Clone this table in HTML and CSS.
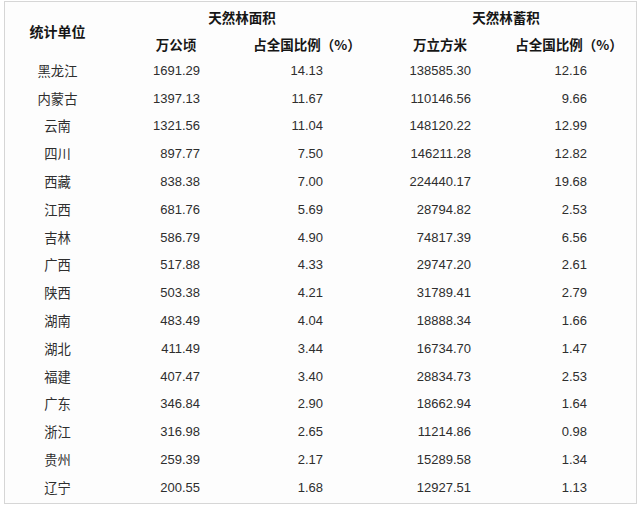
FILE: index.html
```html
<!DOCTYPE html>
<html lang="zh">
<head>
<meta charset="utf-8">
<title>天然林面积与蓄积</title>
<link rel="stylesheet" href="styles.css">
</head>
<body>
<div class="frame">
<table class="stats">
<colgroup>
<col class="c1"><col class="c2"><col class="c3"><col class="c4"><col class="c5">
</colgroup>
<thead>
<tr class="h1">
<th rowspan="2" class="unit">统计单位</th>
<th colspan="2" class="grp grp-a">天然林面积</th>
<th colspan="2" class="grp grp-b">天然林蓄积</th>
</tr>
<tr class="h2">
<th class="sub s2">万公顷</th>
<th class="sub s3">占全国比例（%）</th>
<th class="sub s4">万立方米</th>
<th class="sub s5">占全国比例（%）</th>
</tr>
</thead>
<tbody>
<tr><td class="name">黑龙江</td><td class="n n2">1691.29</td><td class="n n3">14.13</td><td class="n n4">138585.30</td><td class="n n5">12.16</td></tr>
<tr><td class="name">内蒙古</td><td class="n n2">1397.13</td><td class="n n3">11.67</td><td class="n n4">110146.56</td><td class="n n5">9.66</td></tr>
<tr><td class="name">云南</td><td class="n n2">1321.56</td><td class="n n3">11.04</td><td class="n n4">148120.22</td><td class="n n5">12.99</td></tr>
<tr><td class="name">四川</td><td class="n n2">897.77</td><td class="n n3">7.50</td><td class="n n4">146211.28</td><td class="n n5">12.82</td></tr>
<tr><td class="name">西藏</td><td class="n n2">838.38</td><td class="n n3">7.00</td><td class="n n4">224440.17</td><td class="n n5">19.68</td></tr>
<tr><td class="name">江西</td><td class="n n2">681.76</td><td class="n n3">5.69</td><td class="n n4">28794.82</td><td class="n n5">2.53</td></tr>
<tr><td class="name">吉林</td><td class="n n2">586.79</td><td class="n n3">4.90</td><td class="n n4">74817.39</td><td class="n n5">6.56</td></tr>
<tr><td class="name">广西</td><td class="n n2">517.88</td><td class="n n3">4.33</td><td class="n n4">29747.20</td><td class="n n5">2.61</td></tr>
<tr><td class="name">陕西</td><td class="n n2">503.38</td><td class="n n3">4.21</td><td class="n n4">31789.41</td><td class="n n5">2.79</td></tr>
<tr><td class="name">湖南</td><td class="n n2">483.49</td><td class="n n3">4.04</td><td class="n n4">18888.34</td><td class="n n5">1.66</td></tr>
<tr><td class="name">湖北</td><td class="n n2">411.49</td><td class="n n3">3.44</td><td class="n n4">16734.70</td><td class="n n5">1.47</td></tr>
<tr><td class="name">福建</td><td class="n n2">407.47</td><td class="n n3">3.40</td><td class="n n4">28834.73</td><td class="n n5">2.53</td></tr>
<tr><td class="name">广东</td><td class="n n2">346.84</td><td class="n n3">2.90</td><td class="n n4">18662.94</td><td class="n n5">1.64</td></tr>
<tr><td class="name">浙江</td><td class="n n2">316.98</td><td class="n n3">2.65</td><td class="n n4">11214.86</td><td class="n n5">0.98</td></tr>
<tr><td class="name">贵州</td><td class="n n2">259.39</td><td class="n n3">2.17</td><td class="n n4">15289.58</td><td class="n n5">1.34</td></tr>
<tr><td class="name">辽宁</td><td class="n n2">200.55</td><td class="n n3">1.68</td><td class="n n4">12927.51</td><td class="n n5">1.13</td></tr>
</tbody>
</table>
</div>
</body>
</html>
```

FILE: styles.css
```css
html, body {
  margin: 0;
  padding: 0;
  background: #ffffff;
}

body {
  font-family: "Liberation Sans", "Noto Sans CJK SC", sans-serif;
  color: #262626;
}

.frame {
  box-sizing: border-box;
  width: 633px;
  height: 503px;
  margin: 1px 0 0 4px;
  border: 1px solid #d6d6d6;
  background: #fdfdfd;
}

.stats {
  width: 631px;
  table-layout: fixed;
  border-collapse: collapse;
  border-spacing: 0;
}

.c1 { width: 105px; }
.c2 { width: 132px; }
.c3 { width: 126px; }
.c4 { width: 144px; }
.c5 { width: 124px; }

.stats th,
.stats td {
  padding: 0;
  white-space: nowrap;
}

.stats th {
  font-family: "Noto Sans CJK SC", "Liberation Sans", sans-serif;
  font-weight: 700;
  font-size: 13.5px;
  color: #161616;
  text-align: center;
  line-height: 16px;
}

.stats .h1 { height: 29px; }
.stats .h2 { height: 26px; }

.stats th.grp {
  vertical-align: top;
  padding-top: 7px;
}

.stats th.unit {
  font-size: 14px;
  vertical-align: middle;
  padding-top: 2px;
}

.stats th.grp-a { padding-left: 6px; }
.stats th.grp-b { padding-left: 8px; }

.stats th.sub { vertical-align: middle; }
.stats th.s3 { padding-left: 4px; }
.stats th.s5 { padding-right: 10px; }

.stats tbody tr { height: 27.8px; }

.stats td {
  font-size: 13px;
  line-height: 16px;
  vertical-align: middle;
  color: #2e2e2e;
}

.stats td.name {
  font-family: "Noto Sans CJK SC", sans-serif;
  font-size: 13.3px;
  text-align: center;
}

.stats td.n { text-align: right; }
.stats td.n2 { padding-right: 42px; }
.stats td.n3 { padding-right: 45px; }
.stats td.n4 { padding-right: 41px; }
.stats td.n5 { padding-right: 49px; }
```
